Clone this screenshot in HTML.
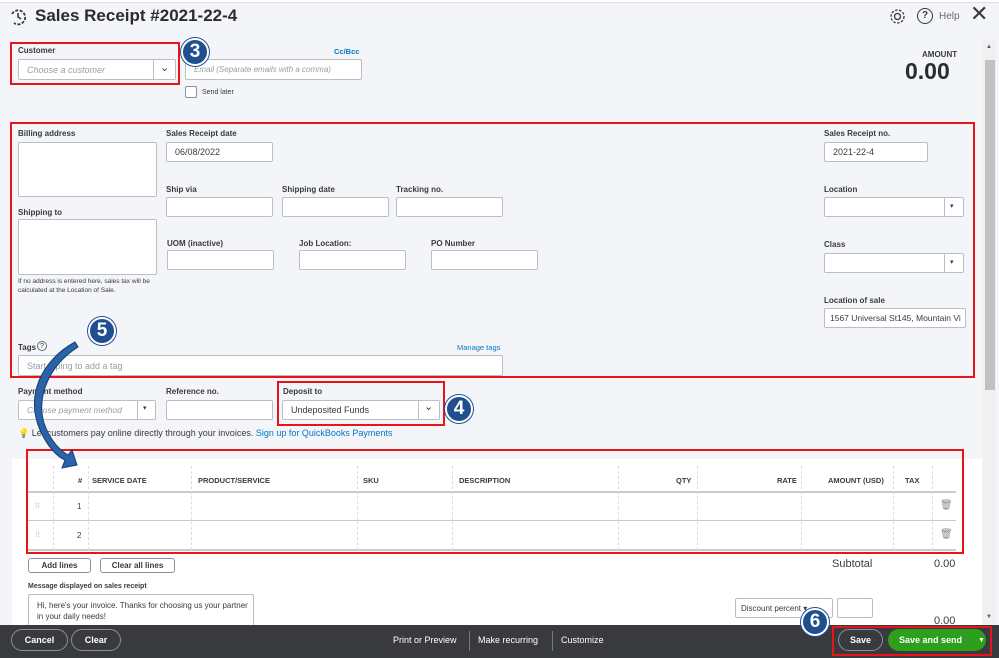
<!DOCTYPE html>
<html><head><meta charset="utf-8"><style>
*{box-sizing:border-box;margin:0;padding:0}
body{width:999px;height:658px;overflow:hidden;background:#f4f5f8;font-family:"Liberation Sans",sans-serif;color:#393a3d;position:relative}
.a{position:absolute}
.lbl{position:absolute;font-size:8px;font-weight:bold;color:#393a3d}
.in{position:absolute;background:#fff;border:1px solid #babec5;border-radius:2px;font-size:9px;padding-left:8px;display:flex;align-items:center}
.red{position:absolute;border:2px solid #e8141a}
.circ{position:absolute;width:28px;height:28px;border-radius:50%;background:#1f4f8f;border:2px solid #fff;box-shadow:0 0 0 1px #1f4f8f;color:#fff;font-weight:bold;font-size:19px;display:flex;align-items:center;justify-content:center}
.ph{color:#9a9ca1;font-style:italic}
.th{position:absolute;top:476px;font-size:7.5px;font-weight:bold}
.vl{position:absolute;top:466px;height:84px;border-left:1px dashed #dcdde0}
.btn{position:absolute;border:1px solid #8d9096;border-radius:3px;background:#fff;font-size:8px;font-weight:bold;display:flex;align-items:center;justify-content:center}
.fb{position:absolute;top:629px;height:22px;border:1px solid #8d9096;border-radius:12px;color:#fff;font-size:9px;font-weight:bold;display:flex;align-items:center;justify-content:center;white-space:nowrap}
</style></head><body>
<div class="a" style="left:0;top:0;width:999px;height:3px;background:#fff;border-bottom:1px solid #ddd"></div>
<svg class="a" style="left:9px;top:8px" width="18" height="18" viewBox="0 0 18 18"><path d="M3 6 A7 7 0 1 1 5 15" fill="none" stroke="#393a3d" stroke-width="1.8" stroke-dasharray="3 1.5"/><path d="M9 5v4l3 2" stroke="#393a3d" stroke-width="1.6" fill="none"/></svg>
<div class="a" style="left:35px;top:6px;font-size:17px;font-weight:bold;color:#2b2c2e">Sales Receipt #2021-22-4</div>
<svg class="a" style="left:889px;top:8px" width="17" height="17" viewBox="0 0 17 17"><circle cx="8.5" cy="8.5" r="3" fill="none" stroke="#393a3d" stroke-width="1.3"/><circle cx="8.5" cy="8.5" r="6.5" fill="none" stroke="#393a3d" stroke-width="1.3" stroke-dasharray="2.5 1.5"/></svg>
<div class="a" style="left:917px;top:8px;width:16px;height:16px;border:1.5px solid #393a3d;border-radius:50%;font-size:10px;text-align:center;line-height:13px;font-weight:bold">?</div>
<div class="a" style="left:939px;top:11px;font-size:10px;color:#6b6c72">Help</div>
<div class="a" style="left:970px;top:1px;font-size:22px;color:#393a3d">✕</div>

<div class="lbl" style="left:18px;top:46px">Customer</div>
<div class="in ph" style="left:18px;top:59px;width:158px;height:21px">Choose a customer</div>
<div class="a" style="left:153px;top:60px;width:1px;height:19px;background:#babec5"></div>
<div class="a" style="left:160px;top:61px;font-size:11px;color:#393a3d">⌄</div>
<div class="red" style="left:10px;top:42px;width:170px;height:43px"></div>
<div class="a" style="left:334px;top:47px;font-size:7.5px;font-weight:bold;color:#0077c5">Cc/Bcc</div>
<div class="in ph" style="left:185px;top:59px;width:177px;height:21px;font-size:8px">Email (Separate emails with a comma)</div>
<div class="a" style="left:185px;top:86px;width:12px;height:12px;background:#fff;border:1px solid #8d9096;border-radius:2px"></div>
<div class="a" style="left:202px;top:89px;font-size:7px">Send later</div>
<div class="a" style="left:922px;top:50px;font-size:8px;font-weight:bold;color:#393a3d">AMOUNT</div>
<div class="a" style="left:905px;top:58px;font-size:23px;font-weight:bold;color:#2b2c2e">0.00</div>

<div class="red" style="left:10px;top:122px;width:965px;height:256px"></div>
<div class="lbl" style="left:18px;top:129px">Billing address</div>
<div class="in" style="left:18px;top:142px;width:139px;height:55px"></div>
<div class="lbl" style="left:18px;top:208px">Shipping to</div>
<div class="in" style="left:18px;top:219px;width:139px;height:56px"></div>
<div class="a" style="left:18px;top:277px;font-size:6.5px;line-height:9px">If no address is entered here, sales tax will be<br>calculated at the Location of Sale.</div>
<div class="lbl" style="left:166px;top:129px">Sales Receipt date</div>
<div class="in" style="left:166px;top:142px;width:107px;height:20px">06/08/2022</div>
<div class="lbl" style="left:166px;top:185px">Ship via</div><div class="in" style="left:166px;top:197px;width:107px;height:20px"></div>
<div class="lbl" style="left:282px;top:185px">Shipping date</div><div class="in" style="left:282px;top:197px;width:107px;height:20px"></div>
<div class="lbl" style="left:396px;top:185px">Tracking no.</div><div class="in" style="left:396px;top:197px;width:107px;height:20px"></div>
<div class="lbl" style="left:167px;top:239px">UOM (inactive)</div><div class="in" style="left:167px;top:250px;width:107px;height:20px"></div>
<div class="lbl" style="left:299px;top:239px">Job Location:</div><div class="in" style="left:299px;top:250px;width:107px;height:20px"></div>
<div class="lbl" style="left:431px;top:239px">PO Number</div><div class="in" style="left:431px;top:250px;width:107px;height:20px"></div>
<div class="lbl" style="left:824px;top:129px">Sales Receipt no.</div>
<div class="in" style="left:824px;top:142px;width:104px;height:20px">2021-22-4</div>
<div class="lbl" style="left:824px;top:185px">Location</div>
<div class="in" style="left:824px;top:197px;width:140px;height:20px"></div>
<div class="a" style="left:944px;top:198px;width:1px;height:18px;background:#babec5"></div><div class="a" style="left:950px;top:202px;font-size:7px">▾</div>
<div class="lbl" style="left:824px;top:240px">Class</div>
<div class="in" style="left:824px;top:253px;width:140px;height:20px"></div>
<div class="a" style="left:944px;top:254px;width:1px;height:18px;background:#babec5"></div><div class="a" style="left:950px;top:258px;font-size:7px">▾</div>
<div class="lbl" style="left:824px;top:296px">Location of sale</div>
<div class="in" style="left:824px;top:308px;width:142px;height:20px;font-size:8.5px;overflow:hidden;white-space:nowrap;padding-left:5px">1567 Universal St145, Mountain Vi</div>
<div class="lbl" style="left:18px;top:343px">Tags</div>
<div class="a" style="left:37px;top:341px;width:10px;height:10px;border:1px solid #6b6c72;border-radius:50%;font-size:7px;text-align:center;line-height:9px">?</div>
<div class="a" style="left:457px;top:343px;font-size:7.5px;color:#0077c5">Manage tags</div>
<div class="in ph" style="left:18px;top:355px;width:485px;height:21px;font-style:normal">Start typing to add a tag</div>

<div class="lbl" style="left:18px;top:387px">Payment method</div>
<div class="in ph" style="left:18px;top:400px;width:138px;height:20px;font-size:8.5px">Choose payment method</div>
<div class="a" style="left:137px;top:401px;width:1px;height:18px;background:#babec5"></div><div class="a" style="left:143px;top:404px;font-size:7px">▾</div>
<div class="lbl" style="left:166px;top:387px">Reference no.</div>
<div class="in" style="left:166px;top:400px;width:107px;height:20px"></div>
<div class="red" style="left:277px;top:381px;width:168px;height:45px"></div>
<div class="lbl" style="left:283px;top:387px">Deposit to</div>
<div class="in" style="left:282px;top:400px;width:158px;height:20px">Undeposited Funds</div>
<div class="a" style="left:418px;top:401px;width:1px;height:18px;background:#babec5"></div><div class="a" style="left:424px;top:400px;font-size:11px">⌄</div>
<div class="a" style="left:18px;top:428px;font-size:9px">💡 Let customers pay online directly through your invoices. <span style="color:#0077c5">Sign up for QuickBooks Payments</span></div>

<div class="a" style="left:12px;top:459px;width:970px;height:166px;background:#fff"></div>
<div class="red" style="left:26px;top:449px;width:938px;height:105px"></div>
<div class="a" style="left:28px;top:491px;width:928px;height:2px;background:#c9cacd"></div>
<div class="a" style="left:28px;top:520px;width:928px;height:1px;background:#c9cacd"></div>
<div class="a" style="left:28px;top:549px;width:928px;height:2px;background:#c9cacd"></div>
<div class="vl" style="left:53px"></div><div class="vl" style="left:88px"></div><div class="vl" style="left:191px"></div><div class="vl" style="left:357px"></div><div class="vl" style="left:452px"></div><div class="vl" style="left:618px"></div><div class="vl" style="left:697px"></div><div class="vl" style="left:801px"></div><div class="vl" style="left:893px"></div><div class="vl" style="left:932px"></div>
<div class="th" style="left:78px">#</div><div class="th" style="left:92px">SERVICE DATE</div><div class="th" style="left:198px">PRODUCT/SERVICE</div><div class="th" style="left:363px">SKU</div><div class="th" style="left:459px">DESCRIPTION</div><div class="th" style="left:676px">QTY</div><div class="th" style="left:777px">RATE</div><div class="th" style="left:828px">AMOUNT (USD)</div><div class="th" style="left:905px">TAX</div>
<div class="a" style="left:35px;top:501px;font-size:8px;color:#aaa">⁝⁝</div><div class="a" style="left:77px;top:502px;font-size:8px">1</div><div class="a" style="left:940px;top:500px;font-size:10px;color:#888">🗑</div>
<div class="a" style="left:35px;top:530px;font-size:8px;color:#aaa">⁝⁝</div><div class="a" style="left:77px;top:531px;font-size:8px">2</div><div class="a" style="left:940px;top:529px;font-size:10px;color:#888">🗑</div>
<div class="btn" style="left:28px;top:558px;width:63px;height:15px">Add lines</div>
<div class="btn" style="left:100px;top:558px;width:75px;height:15px">Clear all lines</div>
<div class="a" style="left:832px;top:558px;font-size:11px">Subtotal</div>
<div class="a" style="left:934px;top:558px;font-size:11px">0.00</div>
<div class="a" style="left:28px;top:583px;font-size:7px;font-weight:bold">Message displayed on sales receipt</div>
<div class="in" style="left:28px;top:594px;width:226px;height:35px;align-items:flex-start;padding-top:5px;font-size:8px;line-height:11px">Hi, here's your invoice. Thanks for choosing us your partner in your daily needs!</div>
<div class="in" style="left:735px;top:598px;width:98px;height:20px;font-size:8px;padding-left:5px">Discount percent ▾</div>
<div class="in" style="left:837px;top:598px;width:36px;height:20px"></div>
<div class="a" style="left:934px;top:615px;font-size:11px">0.00</div>

<div class="a" style="left:983px;top:40px;width:13px;height:585px;background:#f0f0f0"></div>
<div class="a" style="left:985px;top:60px;width:10px;height:330px;background:#c1c1c1"></div>
<div class="a" style="left:986px;top:44px;font-size:6px;color:#555">▲</div>
<div class="a" style="left:986px;top:614px;font-size:6px;color:#555">▼</div>

<div class="a" style="left:0;top:625px;width:999px;height:33px;background:#393a3d"></div>
<div class="fb" style="left:11px;width:57px">Cancel</div>
<div class="fb" style="left:71px;width:50px">Clear</div>
<div class="a" style="left:393px;top:635px;font-size:9px;color:#fff">Print or Preview</div>
<div class="a" style="left:469px;top:631px;width:1px;height:20px;background:#777"></div>
<div class="a" style="left:478px;top:635px;font-size:9px;color:#fff">Make recurring</div>
<div class="a" style="left:552px;top:631px;width:1px;height:20px;background:#777"></div>
<div class="a" style="left:561px;top:635px;font-size:9px;color:#fff">Customize</div>
<div class="fb" style="left:838px;width:45px">Save</div>
<div class="fb" style="left:888px;width:98px;background:#2ca01c;border-color:#2ca01c;justify-content:flex-start;padding-left:10px">Save and send<span style="margin-left:16px;font-size:7px">▼</span></div>
<div class="red" style="left:832px;top:626px;width:160px;height:30px"></div>

<svg class="a" style="left:20px;top:335px" width="70" height="150" viewBox="0 0 70 150"><path d="M55 7 C22 25 5 60 20 95 C28 113 38 122 45 125 L42 133 L57 130 L52 115 L48 120 C36 113 28 100 24 88 C16 60 30 30 58 12 Z" fill="#2a63a8" stroke="#163e70" stroke-width="1"/></svg>
<div class="circ" style="left:181px;top:38px">3</div>
<div class="circ" style="left:88px;top:317px">5</div>
<div class="circ" style="left:445px;top:395px">4</div>
<div class="circ" style="left:801px;top:608px">6</div>
</body></html>
